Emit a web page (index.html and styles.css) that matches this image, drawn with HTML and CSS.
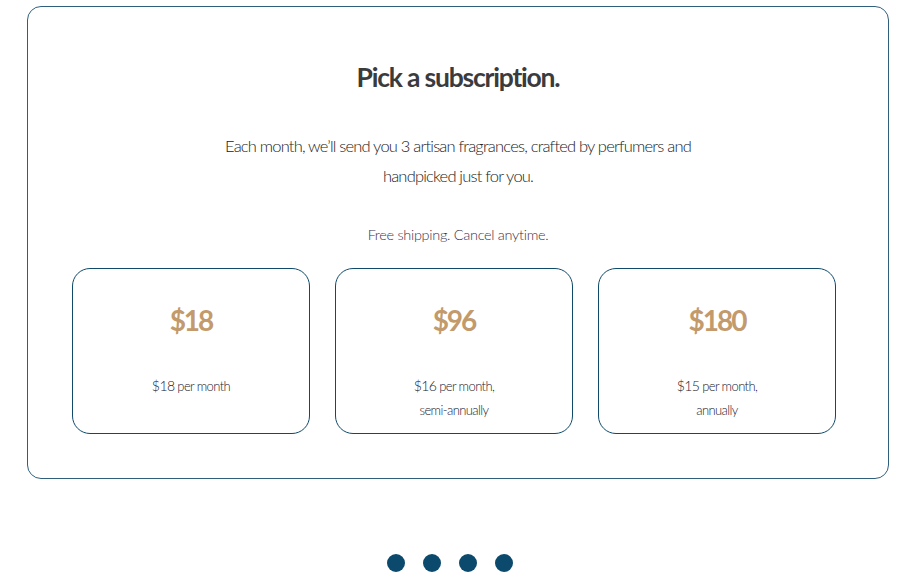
FILE: index.html
```html
<!DOCTYPE html>
<html>
<head>
<meta charset="utf-8">
<link rel="stylesheet" href="styles.css">
</head>
<body>
<section class="panel">
  <h1 class="title">Pick a subscription.</h1>
  <p class="lead">Each month, we’ll send you 3 artisan fragrances, crafted by perfumers and<br>handpicked just for you.</p>
  <p class="note">Free shipping. Cancel anytime.</p>
  <div class="plans">
    <div class="plan">
      <div class="price">$18</div>
      <div class="detail"><span class="amt">$18</span> per month</div>
    </div>
    <div class="plan">
      <div class="price">$96</div>
      <div class="detail"><span class="amt">$16</span> per month,<br>semi-annually</div>
    </div>
    <div class="plan">
      <div class="price">$180</div>
      <div class="detail"><span class="amt">$15</span> per month,<br>annually</div>
    </div>
  </div>
</section>
<div class="dots">
  <span class="dot"></span><span class="dot"></span><span class="dot"></span><span class="dot"></span>
</div>
</body>
</html>
```
FILE: styles.css
```css
html, body {
  margin: 0;
  padding: 0;
  background: #fff;
}
body {
  font-family: Lato, "Open Sans", sans-serif;
  color: #3a3a3a;
}
.panel {
  box-sizing: border-box;
  width: 862px;
  margin: 6px auto 0;
  border: 1px solid #2f5f7c;
  border-radius: 14px;
  padding: 54px 0 44px;
  text-align: center;
}
.title {
  margin: 0;
  font-size: 26.5px;
  line-height: 32px;
  font-weight: 700;
  color: #3b3b3d;
  letter-spacing: -1.2px;
}
.lead {
  margin: 38px 0 0;
  font-size: 16.5px;
  line-height: 30px;
  font-weight: 300;
  color: #222;
  letter-spacing: -0.8px;
}
.note {
  margin: 34px 0 0;
  font-size: 14.5px;
  line-height: 20px;
  font-weight: 300;
  color: #3f2f48;
  letter-spacing: -0.3px;
}
.plans {
  display: flex;
  gap: 25px;
  padding: 0 44px;
  margin-top: 23px;
}
.plan {
  box-sizing: border-box;
  width: 238px;
  height: 166px;
  border: 1px solid #0f4a6a;
  border-radius: 18px;
  padding-top: 33px;
}
.price {
  font-size: 28px;
  line-height: 36px;
  font-weight: 700;
  color: #c29a6b;
  letter-spacing: -2px;
}
.detail {
  margin-top: 36px;
  font-size: 13px;
  line-height: 24px;
  font-weight: 300;
  color: #222230;
  letter-spacing: -0.6px;
}
.amt {
  font-size: 14px;
}
.dots {
  display: flex;
  justify-content: center;
  gap: 18px;
  margin-top: 75px;
  padding-right: 16px;
}
.dot {
  width: 18px;
  height: 18px;
  border-radius: 50%;
  background: #0b4a6c;
}
```
